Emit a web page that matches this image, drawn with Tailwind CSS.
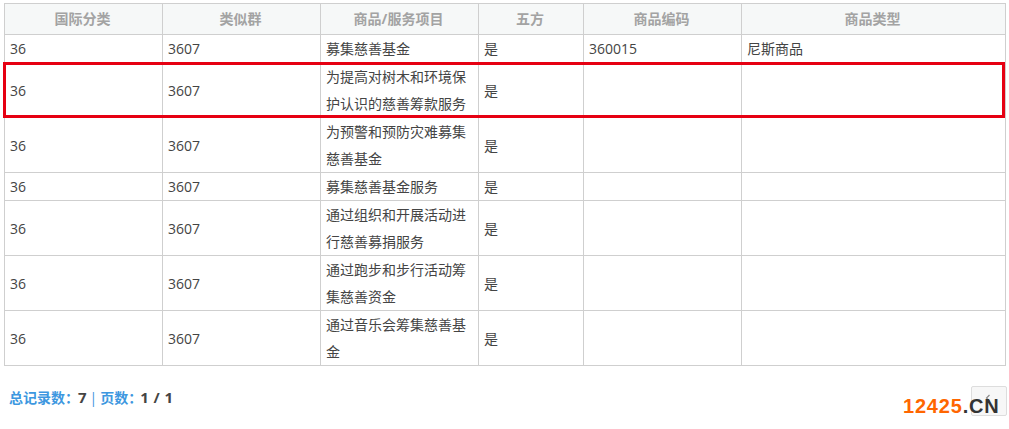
<!DOCTYPE html>
<html lang="zh">
<head>
<meta charset="utf-8">
<script src="https://cdn.jsdelivr.net/npm/@tailwindcss/browser@4"></script>
</head>
<body class="bg-white">
<div class="relative w-[1009px] h-[429px] overflow-hidden bg-white pt-[3px] pl-[4px] font-['Open_Sans','Noto_Sans_CJK_SC',sans-serif] text-[14px] leading-[27px] text-[#444]">
  <table class="w-[1001px] table-fixed border-collapse">
    <colgroup>
      <col class="w-[158px]"><col class="w-[158px]"><col class="w-[158px]"><col class="w-[105px]"><col class="w-[158px]"><col class="w-[264px]">
    </colgroup>
    <thead>
      <tr class="h-[31px] bg-[#f6f8f8] text-center font-bold text-[#a3a3a3]">
        <th class="border border-[#cfcfcf] p-0 pb-[1px] pr-[2px]">国际分类</th>
        <th class="border border-[#cfcfcf] p-0 pb-[1px] pr-[2px]">类似群</th>
        <th class="border border-[#cfcfcf] p-0 pb-[1px] pr-[2px]">商品/服务项目</th>
        <th class="border border-[#cfcfcf] p-0 pb-[1px] pr-[2px]">五方</th>
        <th class="border border-[#cfcfcf] p-0 pb-[1px] pr-[2px]">商品编码</th>
        <th class="border border-[#cfcfcf] p-0 pb-[1px] pr-[2px]">商品类型</th>
      </tr>
    </thead>
    <tbody>
      <tr>
        <td class="border border-[#cfcfcf] px-[5px] py-0">36</td><td class="border border-[#cfcfcf] px-[5px] py-0">3607</td><td class="border border-[#cfcfcf] px-[5px] py-0">募集慈善基金</td><td class="border border-[#cfcfcf] px-[5px] py-0">是</td><td class="border border-[#cfcfcf] px-[5px] py-0">360015</td><td class="border border-[#cfcfcf] px-[5px] py-0">尼斯商品</td>
      </tr>
      <tr>
        <td class="border border-[#cfcfcf] px-[5px] py-0">36</td><td class="border border-[#cfcfcf] px-[5px] py-0">3607</td><td class="border border-[#cfcfcf] px-[5px] py-0">为提高对树木和环境保护认识的慈善筹款服务</td><td class="border border-[#cfcfcf] px-[5px] py-0">是</td><td class="border border-[#cfcfcf] px-[5px] py-0"></td><td class="border border-[#cfcfcf] px-[5px] py-0"></td>
      </tr>
      <tr>
        <td class="border border-[#cfcfcf] px-[5px] py-0">36</td><td class="border border-[#cfcfcf] px-[5px] py-0">3607</td><td class="border border-[#cfcfcf] px-[5px] py-0">为预警和预防灾难募集慈善基金</td><td class="border border-[#cfcfcf] px-[5px] py-0">是</td><td class="border border-[#cfcfcf] px-[5px] py-0"></td><td class="border border-[#cfcfcf] px-[5px] py-0"></td>
      </tr>
      <tr>
        <td class="border border-[#cfcfcf] px-[5px] py-0">36</td><td class="border border-[#cfcfcf] px-[5px] py-0">3607</td><td class="border border-[#cfcfcf] px-[5px] py-0">募集慈善基金服务</td><td class="border border-[#cfcfcf] px-[5px] py-0">是</td><td class="border border-[#cfcfcf] px-[5px] py-0"></td><td class="border border-[#cfcfcf] px-[5px] py-0"></td>
      </tr>
      <tr>
        <td class="border border-[#cfcfcf] px-[5px] py-0">36</td><td class="border border-[#cfcfcf] px-[5px] py-0">3607</td><td class="border border-[#cfcfcf] px-[5px] py-0">通过组织和开展活动进行慈善募捐服务</td><td class="border border-[#cfcfcf] px-[5px] py-0">是</td><td class="border border-[#cfcfcf] px-[5px] py-0"></td><td class="border border-[#cfcfcf] px-[5px] py-0"></td>
      </tr>
      <tr>
        <td class="border border-[#cfcfcf] px-[5px] py-0">36</td><td class="border border-[#cfcfcf] px-[5px] py-0">3607</td><td class="border border-[#cfcfcf] px-[5px] py-0">通过跑步和步行活动筹集慈善资金</td><td class="border border-[#cfcfcf] px-[5px] py-0">是</td><td class="border border-[#cfcfcf] px-[5px] py-0"></td><td class="border border-[#cfcfcf] px-[5px] py-0"></td>
      </tr>
      <tr>
        <td class="border border-[#cfcfcf] px-[5px] py-0">36</td><td class="border border-[#cfcfcf] px-[5px] py-0">3607</td><td class="border border-[#cfcfcf] px-[5px] py-0">通过音乐会筹集慈善基金</td><td class="border border-[#cfcfcf] px-[5px] py-0">是</td><td class="border border-[#cfcfcf] px-[5px] py-0"></td><td class="border border-[#cfcfcf] px-[5px] py-0"></td>
      </tr>
    </tbody>
  </table>
  <div class="mt-[18px] ml-[5px] flex items-center font-bold text-[#444] leading-[27px]">
    <span class="text-[#3d97e0]">总记录数：</span><span class="-ml-[1px] text-[15px]">7</span><span class="mx-[3px] font-normal text-[#3d97e0]">|</span><span class="text-[#3d97e0]">页数：</span><span class="-ml-[2px] text-[15px] tracking-[0.4px]">1 / 1</span>
  </div>
  <!-- red highlight over the second row -->
  <div class="absolute left-[3px] top-[62px] w-[1002px] h-[56px] border-[3px] border-[#e60012]"></div>
  <!-- pager button -->
  <div class="absolute left-[971px] top-[386px] w-[36px] h-[30px] rounded-[2px] border border-[#dddddd] bg-[#f7f7f7]">
    <svg class="absolute left-[13px] top-[7px]" width="6" height="8" viewBox="0 0 6 8" fill="none" stroke="#8a8a8a" stroke-width="1.2"><path d="M4.5 1 L1.5 4 L4.5 7"/></svg>
  </div>
  <!-- watermark -->
  <div class="absolute left-[903px] top-[392px] font-['Liberation_Sans',sans-serif] text-[20px] leading-[28px] font-bold tracking-[0.8px] text-[#ff6600]">12425<span class="text-[#333]">.CN</span></div>
</div>
</body>
</html>
